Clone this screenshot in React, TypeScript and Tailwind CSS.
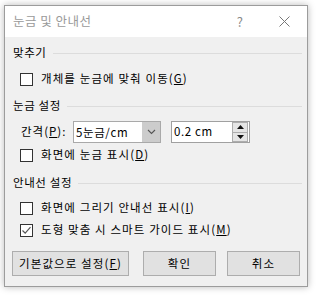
const font = { fontFamily: '"Noto Sans CJK KR", "Noto Sans", sans-serif' };

function Box({ checked = false }: { checked?: boolean }) {
  return (
    <span className="w-[13px] h-[13px] border border-[#333333] bg-white flex items-center justify-center shrink-0">
      {checked && (
        <svg width="11" height="11" viewBox="0 0 11 11">
          <path d="M1.5 5.5 L4.2 8.2 L9.5 2.2" fill="none" stroke="#555555" strokeWidth="1.2" />
        </svg>
      )}
    </span>
  );
}

function Check({ label, hot, checked }: { label: string; hot: string; checked?: boolean }) {
  return (
    <div className="h-[20px] flex items-center pl-[7px] gap-[8px]">
      <Box checked={checked} />
      <span className="text-[11.5px] leading-none tracking-[1.1px] text-black">
        {label}(<u>{hot}</u>)
      </span>
    </div>
  );
}

function Header({ text }: { text: string }) {
  return (
    <div className="h-[20px] flex items-center gap-[6px] pr-[5px]">
      <span className="text-[11.5px] leading-none tracking-[0.6px] text-black">{text}</span>
      <div className="flex-1 h-px bg-[#dcdcdc]" />
    </div>
  );
}

export default function App() {
  return (
    <div className="w-[316px] h-[295px] bg-white pt-[5px] pl-[4px]" style={font}>
      <div className="w-[304px] h-[282px] border border-[#9c9c9c] flex flex-col shadow-[0_0_7px_rgba(0,0,0,0.28)]">
        <div className="h-[31px] bg-white flex items-center pl-[8px] pr-[17px]">
          <span className="text-[12.5px] tracking-[0.5px] text-[#9a9a9a] flex-1">눈금 및 안내선</span>
          <span className="text-[13px] text-[#8a8a8a] mr-[36px]">?</span>
          <svg width="11" height="11" viewBox="0 0 11 11">
            <path d="M0.5 0.5 L10.5 10.5 M10.5 0.5 L0.5 10.5" stroke="#777777" strokeWidth="1" />
          </svg>
        </div>
        <div className="flex-1 bg-[#f0f0f0] flex flex-col pl-[8px] pt-[6px]">
          <Header text="맞추기" />
          <div className="mt-[6px]">
            <Check label="개체를 눈금에 맞춰 이동" hot="G" />
          </div>
          <div className="mt-[7px]">
            <Header text="눈금 설정" />
          </div>
          <div className="mt-[5px] h-[22px] flex items-center pl-[8px]">
            <span className="text-[11.5px] leading-none tracking-[1px] text-black w-[52px]">
              간격(<u>P</u>):
            </span>
            <div className="w-[88px] h-[22px] border border-[#a9a9a9] bg-white flex">
              <span className="flex-1 text-[11.5px] leading-[20px] pl-[2px] tracking-[0.6px] text-black">5눈금/cm</span>
              <div className="w-[18px] bg-[#cccccc] flex items-center justify-center">
                <svg width="9" height="6" viewBox="0 0 9 6">
                  <path d="M1 1 L4.5 4.5 L8 1" fill="none" stroke="#555555" strokeWidth="1.1" />
                </svg>
              </div>
            </div>
            <div className="ml-[10px] w-[79px] h-[22px] border border-[#a0a0a0] bg-white flex items-center">
              <span className="flex-1 text-[11.5px] leading-none pl-[2px] tracking-[0.6px] text-black">0.2 cm</span>
              <div className="w-[16px] h-[20px] flex flex-col mr-px">
                <div className="flex-1 border border-[#adadad] bg-[#e5e5e5] flex items-center justify-center">
                  <svg width="7" height="4" viewBox="0 0 7 4">
                    <path d="M0 4 L3.5 0 L7 4 Z" fill="#111111" />
                  </svg>
                </div>
                <div className="flex-1 border border-t-0 border-[#adadad] bg-[#e5e5e5] flex items-center justify-center">
                  <svg width="7" height="4" viewBox="0 0 7 4">
                    <path d="M0 0 L3.5 4 L7 0 Z" fill="#111111" />
                  </svg>
                </div>
              </div>
            </div>
          </div>
          <div className="mt-[2px]">
            <Check label="화면에 눈금 표시" hot="D" />
          </div>
          <div className="mt-[8px]">
            <Header text="안내선 설정" />
          </div>
          <div className="mt-[5px]">
            <Check label="화면에 그리기 안내선 표시" hot="I" />
          </div>
          <div className="mt-[2px]">
            <Check label="도형 맞춤 시 스마트 가이드 표시" hot="M" checked />
          </div>
          <div className="mt-[11px] flex">
            <button className="ml-[-1px] w-[117px] h-[25px] bg-[#e1e1e1] border border-[#adadad] text-[11.5px] tracking-[1.1px] text-black">
              기본값으로 설정(<u>F</u>)
            </button>
            <button className="ml-[14px] w-[73px] h-[25px] bg-[#e1e1e1] border border-[#adadad] text-[11.5px] tracking-[1.1px] text-black">
              확인
            </button>
            <button className="ml-[11px] w-[73px] h-[25px] bg-[#e1e1e1] border border-[#adadad] text-[11.5px] tracking-[1.1px] text-black">
              취소
            </button>
          </div>
        </div>
      </div>
    </div>
  );
}
